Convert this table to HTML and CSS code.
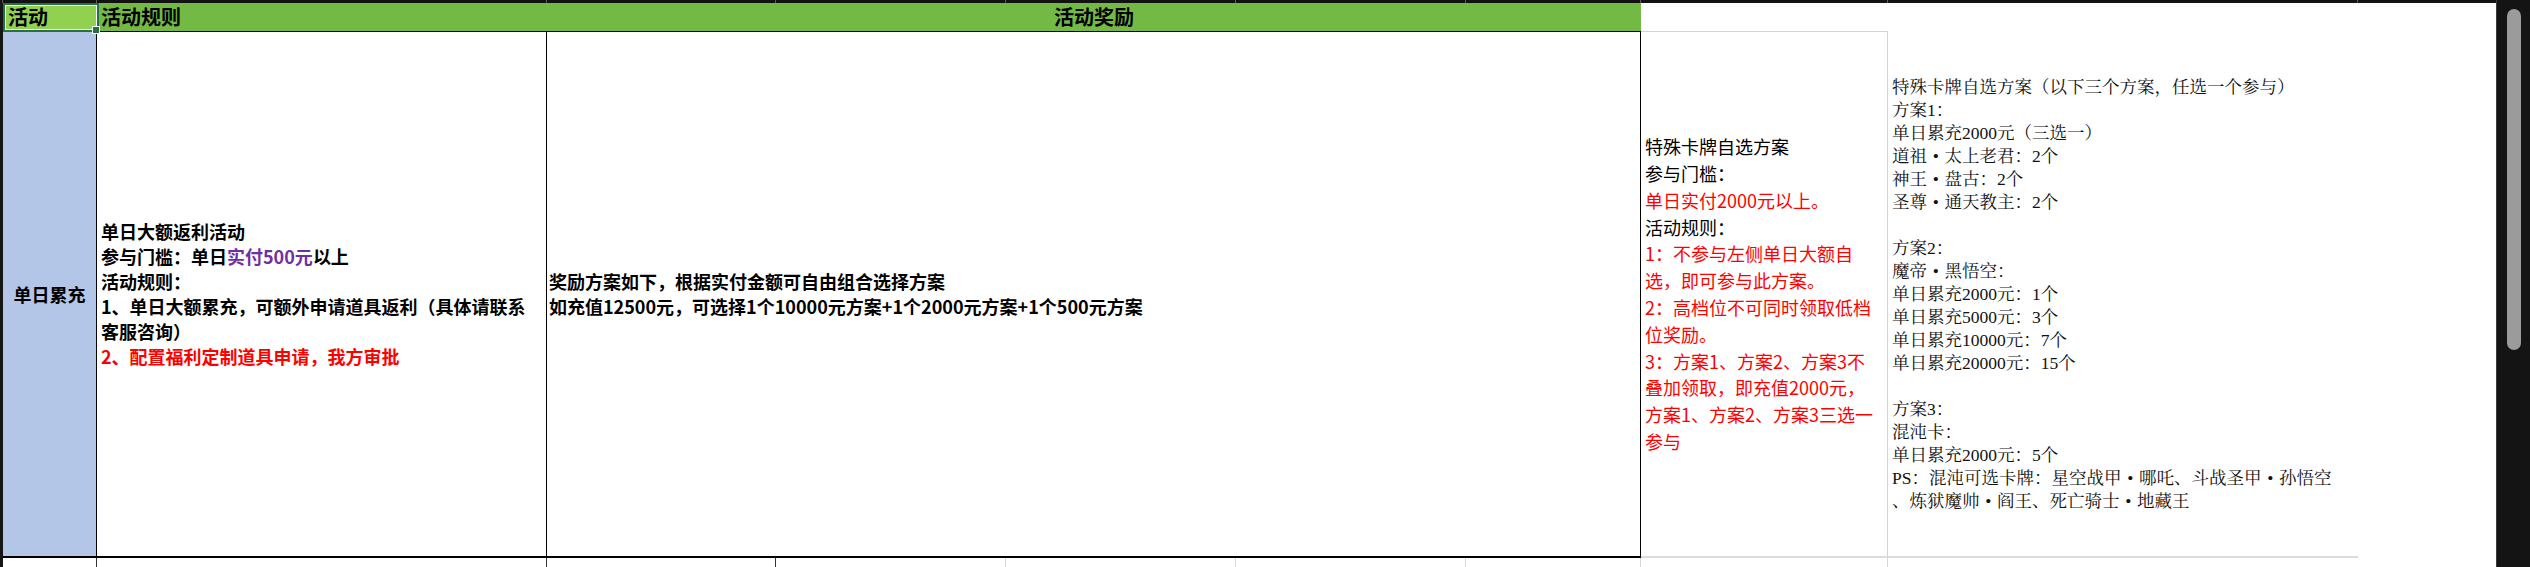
FILE: index.html
```html
<!DOCTYPE html>
<html lang="zh-CN">
<head>
<meta charset="utf-8">
<title>活动</title>
<link rel="stylesheet" href="styles.css">
</head>
<body>
<div class="app">
  <div class="sheet">
    <div class="topbar">
      <span></span><span></span><span></span><span></span><span></span><span></span><span></span><span></span><span></span><span></span><span class="last"></span>
    </div>
    <div class="main">
      <div class="rowhdr"></div>
      <div class="grid">
        <div class="cell h-sel">活动<div class="sel"></div><div class="handle"></div></div>
        <div class="cell h-green h-left">活动规则</div>
        <div class="cell h-green h-center span5">活动奖励</div>
        <div class="cell h-blank span3"></div>

        <div class="cell b-type">单日累充</div>
        <div class="cell b-rule"><p class="bold-text">单日大额返利活动<br>参与门槛：单日<span class="purple">实付500元</span>以上<br>活动规则：<br>1、单日大额累充，可额外申请道具返利（具体请联系<br>客服咨询）<br><span class="red">2、配置福利定制道具申请，我方审批</span></p></div>
        <div class="cell b-reward span5"><p class="bold-text">奖励方案如下，根据实付金额可自由组合选择方案<br>如充值12500元，可选择1个10000元方案+1个2000元方案+1个500元方案</p></div>
        <div class="cell b-special"><p class="reg-text">特殊卡牌自选方案<br>参与门槛：<br><span class="red">单日实付2000元以上。</span><br>活动规则：<br><span class="red">1：不参与左侧单日大额自<br>选，即可参与此方案。<br>2：高档位不可同时领取低档<br>位奖励。<br>3：方案1、方案2、方案3不<br>叠加领取，即充值2000元，<br>方案1、方案2、方案3三选一<br>参与</span></p></div>
        <div class="cell b-plans">
          <div class="serif-text">
            <div class="ln">特殊卡牌自选方案（以下三个方案，任选一个参与）</div>
            <div class="ln">方案1：</div>
            <div class="ln">单日累充2000元（三选一）</div>
            <div class="ln">道祖<span class="dot">•</span>太上老君：2个</div>
            <div class="ln">神王<span class="dot">•</span>盘古：2个</div>
            <div class="ln">圣尊<span class="dot">•</span>通天教主：2个</div>
            <div class="ln"></div>
            <div class="ln">方案2：</div>
            <div class="ln">魔帝<span class="dot">•</span>黑悟空：</div>
            <div class="ln">单日累充2000元：1个</div>
            <div class="ln">单日累充5000元：3个</div>
            <div class="ln">单日累充10000元：7个</div>
            <div class="ln">单日累充20000元：15个</div>
            <div class="ln"></div>
            <div class="ln">方案3：</div>
            <div class="ln">混沌卡：</div>
            <div class="ln">单日累充2000元：5个</div>
            <div class="ln">PS：混沌可选卡牌：星空战甲<span class="dot">•</span>哪吒、斗战圣甲<span class="dot">•</span>孙悟空</div>
            <div class="ln">、炼狱魔帅<span class="dot">•</span>阎王、死亡骑士<span class="dot">•</span>地藏王</div>
          </div>
        </div>
        <div class="cell b-empty"></div>

        <div class="cell f-dark"></div>
        <div class="cell f-dark"></div>
        <div class="cell f-dark"></div>
        <div class="cell f-light"></div>
        <div class="cell f-light"></div>
        <div class="cell f-light"></div>
        <div class="cell f-light"></div>
        <div class="cell f-light"></div>
        <div class="cell f-none"></div>
        <div class="cell f-none"></div>
      </div>
    </div>
  </div>
  <div class="scrollbar"><div class="thumb"></div></div>
</div>
</body>
</html>
```

FILE: styles.css
```css
* { box-sizing: border-box; }
html, body { margin: 0; padding: 0; background: #ffffff; }

.app {
  display: flex;
  width: 2530px;
  height: 567px;
  overflow: hidden;
  font-family: "Noto Sans CJK SC", sans-serif;
  color: #000;
}

.sheet {
  width: 2496px;
  display: flex;
  flex-direction: column;
}

.topbar {
  height: 3px;
  display: grid;
  grid-template-columns: 3px 94px 450px 229px 230px 230px 230px 175px 247px 470px 138px;
  background: #121212;
}
.topbar span { border-right: 1px solid #5e5e5e; }
.topbar span.last { border-right: none; }

.main {
  display: flex;
  flex: 1;
}

.rowhdr {
  width: 3px;
  background: #161616;
}

.grid {
  width: 2493px;
  display: grid;
  grid-template-columns: 94px 450px 229px 230px 230px 230px 175px 247px 470px 138px;
  grid-template-rows: 28px 527px 1fr;
}

.cell { min-width: 0; }
.span5 { grid-column: span 5; }
.span3 { grid-column: span 3; }

/* header row */
.h-sel {
  position: relative;
  background: #92d050;
  font-size: 20px;
  font-weight: 700;
  line-height: 28px;
  padding-left: 5px;
  white-space: nowrap;
}
.sel {
  position: absolute;
  left: 0;
  top: 0;
  right: -2px;
  bottom: -1px;
  border: 2px solid #217346;
  box-shadow: inset 0 0 0 1px #ffffff;
  z-index: 2;
}
.handle {
  position: absolute;
  right: -3px;
  bottom: -3px;
  width: 8px;
  height: 8px;
  background: #217346;
  border: 1px solid #ffffff;
  z-index: 3;
}
.h-green {
  background: #72ba43;
  font-size: 20px;
  font-weight: 700;
  line-height: 28px;
  white-space: nowrap;
}
.h-left { padding-left: 4px; }
.h-center { text-align: center; }
.h-blank { background: #ffffff; }

/* body row */
.b-type {
  background: #b4c6e7;
  border-top: 1px solid #000;
  border-right: 1px solid #000;
  border-bottom: 2px solid #000;
  display: flex;
  align-items: center;
  justify-content: center;
  font-size: 18px;
  font-weight: 700;
  white-space: nowrap;
}
.b-rule {
  border-top: 1px solid #000;
  border-right: 1px solid #000;
  border-bottom: 2px solid #000;
  display: flex;
  align-items: center;
  padding-left: 4px;
}
.b-reward {
  border-top: 1px solid #000;
  border-right: 1px solid #000;
  border-bottom: 2px solid #000;
  display: flex;
  align-items: center;
  padding-left: 2px;
}
.b-special {
  border-top: 1px solid #d4d4d4;
  border-right: 1px solid #d4d4d4;
  border-bottom: 2px solid #dcdcdc;
  display: flex;
  align-items: center;
  padding-left: 4px;
}
.b-plans {
  border-bottom: 2px solid #dcdcdc;
  display: flex;
  align-items: center;
  padding-left: 4px;
}
.b-empty { background: #ffffff; }

.bold-text {
  margin: 0;
  font-size: 18px;
  font-weight: 700;
  line-height: 25px;
  white-space: nowrap;
}
.reg-text {
  margin: 0;
  font-size: 18px;
  font-weight: 400;
  line-height: 26.8px;
  white-space: nowrap;
}
.serif-text {
  font-family: "Liberation Serif", "Noto Serif CJK SC", "Noto Sans CJK SC", serif;
  font-size: 17.5px;
  font-weight: 400;
  color: #111;
  white-space: nowrap;
  padding-top: 2px;
}
.ln {
  height: 23px;
  line-height: 23px;
  overflow: visible;
}
.dot {
  display: inline-block;
  width: 1em;
  text-align: center;
}

.purple { color: #7030a0; }
.red { color: #ff0000; }

/* partial next row */
.f-dark { border-right: 1px solid #333; }
.f-light { border-right: 1px solid #d9d9d9; }

/* scrollbar */
.scrollbar {
  width: 34px;
  background: #141414;
  border-left: 1px solid #3a3a3a;
  padding-top: 9px;
  padding-left: 10px;
}
.thumb {
  width: 14px;
  height: 341px;
  border-radius: 7px;
  background: #9b9b9b;
}
```
